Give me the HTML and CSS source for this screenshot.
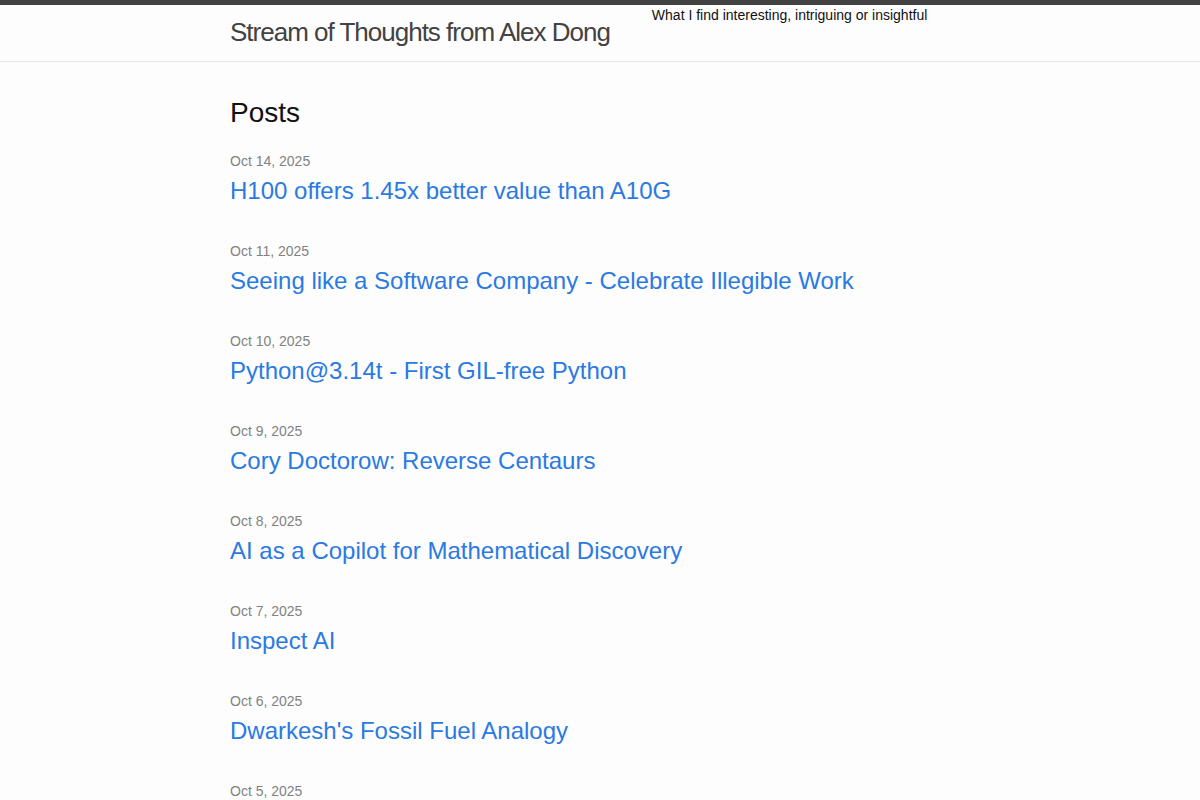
FILE: index.html
```html
<!DOCTYPE html>
<html lang="en">
<head>
<meta charset="utf-8">
<title>Stream of Thoughts from Alex Dong</title>
<link rel="stylesheet" href="styles.css">
</head>
<body>
<header class="site-header">
  <div class="wrapper header-inner">
    <a class="site-title" href="#">Stream of Thoughts from Alex Dong</a>
    <p class="site-description">What I find interesting, intriguing or insightful</p>
  </div>
</header>
<main class="page-content">
  <div class="wrapper">
    <h1 class="post-list-heading">Posts</h1>
    <ul class="post-list">
      <li><span class="post-meta">Oct 14, 2025</span><h3><a class="post-link" href="#">H100 offers 1.45x better value than A10G</a></h3></li>
      <li><span class="post-meta">Oct 11, 2025</span><h3><a class="post-link" href="#">Seeing like a Software Company - Celebrate Illegible Work</a></h3></li>
      <li><span class="post-meta">Oct 10, 2025</span><h3><a class="post-link" href="#">Python@3.14t - First GIL-free Python</a></h3></li>
      <li><span class="post-meta">Oct 9, 2025</span><h3><a class="post-link" href="#">Cory Doctorow: Reverse Centaurs</a></h3></li>
      <li><span class="post-meta">Oct 8, 2025</span><h3><a class="post-link" href="#">AI as a Copilot for Mathematical Discovery</a></h3></li>
      <li><span class="post-meta">Oct 7, 2025</span><h3><a class="post-link" href="#">Inspect AI</a></h3></li>
      <li><span class="post-meta">Oct 6, 2025</span><h3><a class="post-link" href="#">Dwarkesh's Fossil Fuel Analogy</a></h3></li>
      <li><span class="post-meta">Oct 5, 2025</span><h3><a class="post-link" href="#">More thoughts</a></h3></li>
    </ul>
  </div>
</main>
</body>
</html>
```
FILE: styles.css
```css
* { box-sizing: border-box; }
html, body { margin: 0; padding: 0; }
body {
  font-family: "Liberation Sans", Arial, sans-serif;
  font-size: 16px;
  line-height: 1.5;
  color: #111111;
  background: #fdfdfd;
}
.wrapper {
  max-width: 800px;
  margin: 0 auto;
  padding: 0 30px;
}
.site-header {
  box-sizing: content-box;
  border-top: 5px solid #424242;
  border-bottom: 1px solid #e8e8e8;
  min-height: 56px;
}
.header-inner {
  display: flex;
  align-items: flex-start;
  gap: 42px;
}
.site-title {
  font-size: 26px;
  font-weight: 300;
  line-height: 54px;
  letter-spacing: -1px;
  color: #424242;
  text-decoration: none;
  white-space: nowrap;
}
.site-description {
  margin: 0;
  font-size: 14px;
  line-height: 21px;
  color: #111111;
}
.page-content {
  padding: 30px 0;
}
.post-list-heading {
  font-size: 28px;
  font-weight: 400;
  line-height: 42px;
  margin: 0 0 15px;
}
.post-list {
  list-style: none;
  margin: 0;
  padding: 0;
}
.post-list li {
  margin-bottom: 30px;
}
.post-meta {
  font-size: 14px;
  color: #828282;
}
.post-list h3 {
  margin: 0;
  font-weight: 400;
}
.post-link {
  display: block;
  font-size: 24px;
  line-height: 36px;
  color: #2a7ae2;
  text-decoration: none;
}
```
